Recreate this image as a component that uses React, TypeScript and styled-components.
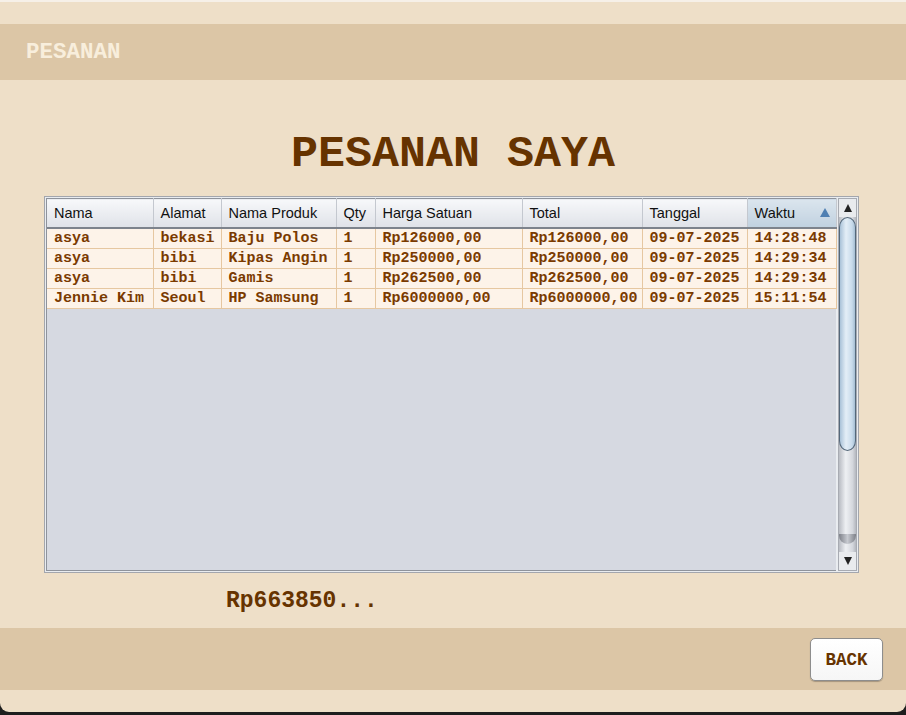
import React from "react";
import styled, { createGlobalStyle } from "styled-components";

const Global = createGlobalStyle`
  html, body { margin: 0; padding: 0; background: #1e1e1e; }
  body { width: 906px; height: 715px; overflow: hidden; }
`;

const mono = `"Courier New", "Liberation Mono", monospace`;
const sans = `"Liberation Sans", Arial, sans-serif`;

const Window = styled.div`
  width: 906px;
  height: 712px;
  background: #eedfc8;
  border-top: 2px solid #f6f0e8;
  box-sizing: border-box;
  border-radius: 0 0 9px 9px;
  display: flex;
  flex-direction: column;
  overflow: hidden;
`;

const TopBar = styled.div`
  margin-top: 22px;
  height: 56px;
  background: #dcc6a6;
  display: flex;
  align-items: center;
  padding-left: 26px;
  font-family: ${mono};
  font-weight: bold;
  font-size: 22.5px;
  color: #f8eedc;
`;

const Title = styled.h1`
  margin: 0;
  height: 116px;
  padding-top: 51px;
  box-sizing: border-box;
  text-align: center;
  font-family: ${mono};
  font-weight: bold;
  font-size: 45px;
  line-height: 48px;
  color: #663300;
`;

const ScrollPane = styled.div`
  margin-left: 44px;
  width: 815px;
  height: 377px;
  box-sizing: border-box;
  border: 1px solid #a3a6ad;
  background: #e9ecf0;
  display: flex;
  padding: 1px;
  gap: 2px;
`;

const Viewport = styled.div`
  width: 790px;
  background: #d6d9e1;
  border-left: 1px solid #8f939b;
  border-bottom: 1px solid #8f939b;
  box-sizing: border-box;
`;

const Table = styled.table`
  border-collapse: collapse;
  table-layout: fixed;
  width: 789px;
`;

const Th = styled.th<{ $sorted?: boolean }>`
  height: 28px;
  padding: 0 0 0 7px;
  text-align: left;
  font-family: ${sans};
  font-weight: normal;
  font-size: 14.5px;
  color: #111;
  border-right: 1px solid #c4c8cf;
  border-bottom: 2px solid #7d838c;
  border-top: 1px solid #8f939b;
  background: ${(p) =>
    p.$sorted
      ? "linear-gradient(#dbe5ee, #c0d1e0)"
      : "linear-gradient(#f7f8fa, #dfe2e8)"};
  position: relative;
  white-space: nowrap;
`;

const SortArrow = styled.span`
  position: absolute;
  right: 6px;
  top: 9px;
  width: 0;
  height: 0;
  border-left: 5px solid transparent;
  border-right: 5px solid transparent;
  border-bottom: 9px solid #4f7fb2;
`;

const Td = styled.td`
  height: 19px;
  padding: 0 0 0 7px;
  font-family: ${mono};
  font-weight: bold;
  font-size: 15px;
  color: #7a3a00;
  background: #fdf3e9;
  border-right: 1px solid #e6c7a1;
  border-bottom: 1px solid #e6c7a1;
  white-space: nowrap;
  overflow: hidden;
`;

const ScrollBar = styled.div`
  width: 20px;
  display: flex;
  flex-direction: column;
  background: linear-gradient(90deg, #b9bcc3, #eef0f3 40%, #d4d7dd 80%, #b4b7be);
  border: 1px solid #a8abb2;
  box-sizing: border-box;
`;

const ArrowBtn = styled.div<{ $down?: boolean }>`
  height: 18px;
  display: flex;
  align-items: center;
  justify-content: center;
  background: #e9ebee;
  &::after {
    content: "";
    width: 0;
    height: 0;
    border-left: 4px solid transparent;
    border-right: 4px solid transparent;
    ${(p) =>
      p.$down
        ? "border-top: 8px solid #222;"
        : "border-bottom: 8px solid #222;"}
  }
`;

const Track = styled.div`
  flex: 1;
  display: flex;
  flex-direction: column;
  padding-bottom: 8px;
`;

const Thumb = styled.div`
  height: 234px;
  box-sizing: border-box;
  border: 1px solid #55687a;
  border-radius: 10px / 12px;
  background: linear-gradient(90deg, #a9c2d8, #e4eef7 40%, #c8dbeb 80%, #a6bed3);
`;

const TrackRest = styled.div`
  flex: 1;
`;

const TrackEnd = styled.div`
  height: 10px;
  border-radius: 0 0 10px 10px;
  background: linear-gradient(90deg, #7e8189, #c7cad0 50%, #7e8189);
`;

const TotalLine = styled.div`
  height: 55px;
  padding-left: 226px;
  display: flex;
  align-items: center;
  font-family: ${mono};
  font-weight: bold;
  font-size: 23px;
  color: #663300;
`;

const Footer = styled.div`
  height: 62px;
  background: #dcc6a6;
  display: flex;
  justify-content: flex-end;
  align-items: flex-start;
  padding: 10px 23px 0 0;
  box-sizing: border-box;
`;

const BackButton = styled.button`
  width: 73px;
  height: 43px;
  background: linear-gradient(#ffffff, #f6f6f6);
  border: 1px solid #8d8d8d;
  border-radius: 5px;
  box-shadow: 0 1px 1px rgba(0, 0, 0, 0.25);
  font-family: ${mono};
  font-weight: bold;
  font-size: 17.5px;
  color: #663300;
  cursor: pointer;
  padding: 0;
`;

const columns = [
  { name: "Nama", w: 106 },
  { name: "Alamat", w: 68 },
  { name: "Nama Produk", w: 115 },
  { name: "Qty", w: 39 },
  { name: "Harga Satuan", w: 147 },
  { name: "Total", w: 120 },
  { name: "Tanggal", w: 105 },
  { name: "Waktu", w: 89 },
];

const rows = [
  ["asya", "bekasi", "Baju Polos", "1", "Rp126000,00", "Rp126000,00", "09-07-2025", "14:28:48"],
  ["asya", "bibi", "Kipas Angin", "1", "Rp250000,00", "Rp250000,00", "09-07-2025", "14:29:34"],
  ["asya", "bibi", "Gamis", "1", "Rp262500,00", "Rp262500,00", "09-07-2025", "14:29:34"],
  ["Jennie Kim", "Seoul", "HP Samsung", "1", "Rp6000000,00", "Rp6000000,00", "09-07-2025", "15:11:54"],
];

export default function App() {
  return (
    <>
      <Global />
      <Window>
        <TopBar>PESANAN</TopBar>
        <Title>PESANAN SAYA</Title>
        <ScrollPane>
          <Viewport>
            <Table>
              <colgroup>
                {columns.map((c) => (
                  <col key={c.name} style={{ width: c.w }} />
                ))}
              </colgroup>
              <thead>
                <tr>
                  {columns.map((c) => (
                    <Th key={c.name} $sorted={c.name === "Waktu"}>
                      {c.name}
                      {c.name === "Waktu" && <SortArrow />}
                    </Th>
                  ))}
                </tr>
              </thead>
              <tbody>
                {rows.map((r, i) => (
                  <tr key={i}>
                    {r.map((v, j) => (
                      <Td key={j}>{v}</Td>
                    ))}
                  </tr>
                ))}
              </tbody>
            </Table>
          </Viewport>
          <ScrollBar>
            <ArrowBtn />
            <Track>
              <Thumb />
              <TrackRest />
              <TrackEnd />
            </Track>
            <ArrowBtn $down />
          </ScrollBar>
        </ScrollPane>
        <TotalLine>Rp663850...</TotalLine>
        <Footer>
          <BackButton>BACK</BackButton>
        </Footer>
      </Window>
    </>
  );
}
